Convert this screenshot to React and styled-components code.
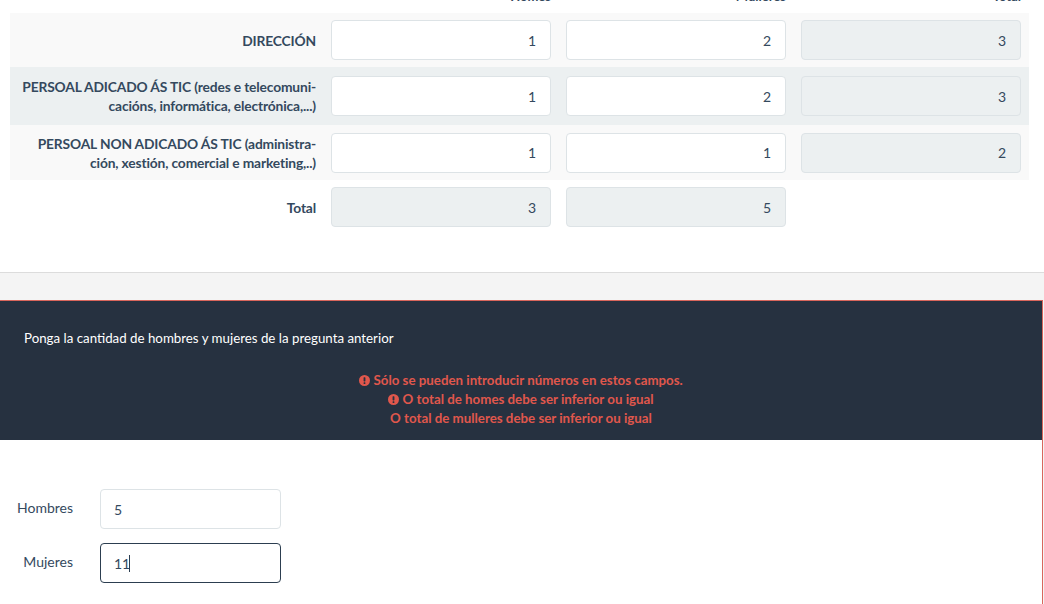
import React from "react";
import styled, { createGlobalStyle } from "styled-components";

const GlobalStyle = createGlobalStyle`
  html, body {
    margin: 0;
    padding: 0;
    background: #f4f4f4;
    font-family: Lato, "Open Sans", sans-serif;
    color: #34495e;
    overflow: hidden;
  }
`;

const rows = [
  { lines: ["DIRECCIÓN"], homes: 1, mulleres: 2, tone: "odd" },
  {
    lines: ["PERSOAL ADICADO ÁS TIC (redes e telecomuni-", "cacións, informática, electrónica,...)"],
    homes: 1,
    mulleres: 2,
    tone: "even",
    pad: 3,
  },
  {
    lines: ["PERSOAL NON ADICADO ÁS TIC (administra-", "ción, xestión, comercial e marketing,..)"],
    homes: 1,
    mulleres: 1,
    tone: "odd",
    pad: 1.5,
  },
];

function ErrorIcon() {
  return (
    <svg width="11" height="11" viewBox="0 0 12 12" aria-hidden="true">
      <circle cx="6" cy="6" r="6" fill="#e0574c" />
      <rect x="5" y="2.4" width="2" height="4.6" rx="0.6" fill="#263140" />
      <rect x="5" y="8" width="2" height="1.8" rx="0.5" fill="#263140" />
    </svg>
  );
}

export default function App() {
  return (
    <>
      <GlobalStyle />
      <Panel>
        <HeaderRow>
          <span />
          <HeadCell>Homes</HeadCell>
          <HeadCell>Mulleres</HeadCell>
          <HeadCell>Total</HeadCell>
        </HeaderRow>
        {rows.map((r, i) => (
          <Row key={i} tone={r.tone}>
            <Label pad={r.pad || 0}>
              {r.lines.map((l, j) => (
                <div key={j}>{l}</div>
              ))}
            </Label>
            <NumberBox defaultValue={r.homes} />
            <NumberBox defaultValue={r.mulleres} />
            <NumberBox value={r.homes + r.mulleres} readOnly disabled />
          </Row>
        ))}
        <Row>
          <Label pad={0}>Total</Label>
          <NumberBox value={3} readOnly disabled />
          <NumberBox value={5} readOnly disabled />
        </Row>
      </Panel>

      <Question>
        <QuestionHead>
          <Prompt>Ponga la cantidad de hombres y mujeres de la pregunta anterior</Prompt>
          <Errors>
            <ErrorLine>
              <ErrorIcon /> Sólo se pueden introducir números en estos campos.
            </ErrorLine>
            <ErrorLine>
              <ErrorIcon /> O total de homes debe ser inferior ou igual
            </ErrorLine>
            <ErrorLine>O total de mulleres debe ser inferior ou igual</ErrorLine>
          </Errors>
        </QuestionHead>
        <QuestionBody>
          <Field>
            <FieldLabel>Hombres</FieldLabel>
            <InputWrap>
              <TextBox defaultValue="5" />
            </InputWrap>
          </Field>
          <Field>
            <FieldLabel>Mujeres</FieldLabel>
            <InputWrap>
              <TextBox defaultValue="11" focused />
              <Caret />
            </InputWrap>
          </Field>
        </QuestionBody>
      </Question>
    </>
  );
}

const Panel = styled.div`
  width: 1042px;
  margin-top: -12px;
  padding: 0 0 38px 10px;
  background: #ffffff;
  border-right: 1px solid #dcdcdc;
  border-bottom: 1px solid #dcdcdc;
`;

const grid = `
  display: grid;
  grid-template-columns: 306px 220px 220px 220px;
  column-gap: 15px;
  width: 1019px;
  box-sizing: border-box;
  padding-right: 8px;
`;

const HeaderRow = styled.div`
  ${grid}
  height: 25px;
`;

const HeadCell = styled.div`
  text-align: right;
  font-size: 13px;
  font-weight: 700;
  line-height: 16px;
  color: #34495e;
`;

const Row = styled.div`
  ${grid}
  align-items: center;
  min-height: 40px;
  padding-top: 7px;
  padding-bottom: 7px;
  background: ${(p) =>
    p.tone === "odd" ? "#f9f9f9" : p.tone === "even" ? "#ecf0f1" : "#ffffff"};
`;

const Label = styled.div`
  text-align: right;
  font-size: 13.8px;
  font-weight: 700;
  line-height: 19px;
  color: #34495e;
  padding: ${(p) => p.pad}px 0;
  letter-spacing: -0.15px;
`;

const NumberBox = styled.input`
  box-sizing: border-box;
  width: 220px;
  height: 40px;
  padding: 0 14px;
  border: 1px solid #dde3e6;
  border-radius: 4px;
  background: ${(p) => (p.disabled ? "#ecf0f1" : "#ffffff")};
  font-family: Lato, sans-serif;
  font-size: 14px;
  color: #34495e;
  -webkit-text-fill-color: #34495e;
  text-align: right;
  outline: none;
`;

const Question = styled.div`
  width: 1042px;
  margin-top: 27px;
  border-top: 1px solid #d9665c;
  border-right: 1px solid #d9665c;
  background: #ffffff;
  height: 320px;
`;

const QuestionHead = styled.div`
  background: #263140;
  padding: 28px 24px 12px;
  height: 139px;
  box-sizing: border-box;
`;

const Prompt = styled.div`
  font-size: 13.3px;
  line-height: 19px;
  color: #ffffff;
`;

const Errors = styled.div`
  margin-top: 23px;
  text-align: center;
  font-size: 13.3px;
  font-weight: 700;
  line-height: 19px;
  color: #e0574c;
`;

const ErrorLine = styled.div`
  svg {
    vertical-align: -1px;
  }
`;

const QuestionBody = styled.div`
  padding: 49px 0 0 0;
  display: flex;
  flex-direction: column;
  gap: 14px;
`;

const Field = styled.div`
  display: flex;
  align-items: center;
  gap: 27px;
`;

const FieldLabel = styled.div`
  width: 73px;
  margin-bottom: 4px;
  text-align: right;
  font-size: 14px;
  color: #34495e;
`;

const InputWrap = styled.div`
  position: relative;
`;

const TextBox = styled.input`
  display: block;
  box-sizing: border-box;
  width: 181px;
  height: 40px;
  padding: 0 13px;
  border: 1px solid ${(p) => (p.focused ? "#2c3e50" : "#dde3e6")};
  border-radius: 4px;
  background: #ffffff;
  font-family: Lato, sans-serif;
  font-size: 14px;
  color: #34495e;
  outline: none;
`;

const Caret = styled.span`
  position: absolute;
  left: 29px;
  top: 12px;
  width: 1px;
  height: 17px;
  background: #2c3e50;
`;
